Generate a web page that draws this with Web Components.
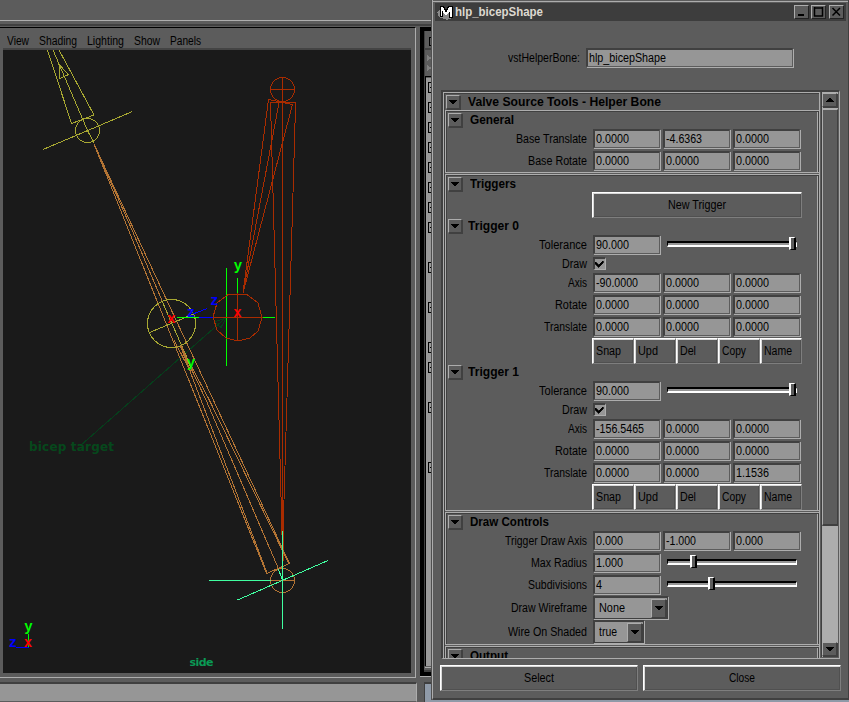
<!DOCTYPE html>
<html lang="en"><head><meta charset="utf-8"><title>hlp_bicepShape</title>
<style>
html,body{margin:0;background:#5c5c5c;overflow:hidden;width:849px;height:702px;font:12px "Liberation Sans",Arial,sans-serif;color:#000}
</style></head><body>
<maya-desktop></maya-desktop>
<script>
const define=(name,html,setup)=>{
  const t=document.createElement('template');t.innerHTML='<style>*{box-sizing:border-box}:host{box-sizing:border-box}</style>'+html;
  customElements.define(name,class extends HTMLElement{
    connectedCallback(){
      if(this.shadowRoot)return;
      const r=this.attachShadow({mode:'open'});
      r.appendChild(t.content.cloneNode(true));
      if(setup)setup(this,r);
    }
  });
};

/* Text condensed or widened to a given advance width */
define('fit-text',`<style>:host{display:inline-block;white-space:nowrap;height:14px;line-height:14px;flex:none}
span{display:inline-block;transform-origin:0 50%}</style><span><slot></slot></span>`,(el,r)=>{
  const w=+el.getAttribute('w'),s=r.querySelector('span');
  s.style.transform=`scaleX(${w/s.getBoundingClientRect().width})`;
  el.style.width=w+'px';
});

define('num-field',`<style>:host{display:flex;align-items:center;flex:none;background:#969696;padding-left:1px;
border:2px solid #404040;border-right:1px solid #5c5c5c;border-bottom:1px solid #5c5c5c;box-shadow:1px 1px 0 #adadad;width:67px;height:19px;margin:0 1px 1px 0}
:host([wide]){width:207px}</style><fit-text></fit-text>`,(el,r)=>{
  const f=r.querySelector('fit-text'),v=el.getAttribute('v');
  const widths={'-4.6363':36,'-90.0000':42,'-156.5465':48,'0.000':27,'1.000':27,'-1.000':30,'4':6,'hlp_bicepShape':77};
  const n=document.createElement('fit-text');n.setAttribute('w',widths[v]||33);n.textContent=v;f.replaceWith(n);
});

define('arrow-button',`<style>:host{display:grid;place-items:center;width:14px;height:14px;flex:none;background:#5c5c5c;border:1px solid #adadad;border-right-color:#404040;border-bottom-color:#404040;box-shadow:1px 1px 0 #404040}
svg{display:block}:host([up]) svg{transform:rotate(180deg)}</style><svg width="8" height="4" shape-rendering="crispEdges"><path d="M0 0H8V1H7V2H6V3H5V4H3V3H2V2H1V1H0Z"/></svg>`);

define('push-button',`<style>:host{display:flex;align-items:center;justify-content:center;height:26px;border:1px solid #fff;border-right-color:#7e7e7e;border-bottom-color:#7e7e7e;box-shadow:inset 1px 1px 0 #d8d8d8,inset -1px -1px 0 #505050;min-width:0}
:host([left]){justify-content:flex-start;padding-left:3px}</style><slot></slot>`);

define('check-box',`<style>:host{display:block;width:13px;height:13px;background:#969696;border:2px solid #404040;border-right:1px solid #adadad;border-bottom:1px solid #adadad}
svg{display:block;margin-left:-1px}</style><svg width="10" height="10" shape-rendering="crispEdges"><path d="M1 3H2V4H3V5H4V6H5V5H6V4H7V3H8V2H9V4H8V5H7V6H6V7H5V8H4V7H3V6H2V5H1Z" stroke="#000" stroke-width=".7"/></svg>`);

define('value-slider',`<style>:host{display:block;width:130px;height:13px;padding-top:6px;margin-left:4px}
.t{height:6px;border-top:2px solid #000;border-left:1px solid #000;border-bottom:2px solid #fff;border-right:1px solid #fff;background:#969696;position:relative}
i{position:absolute;top:-6px;left:var(--at);width:7px;height:13px;background:#5c5c5c;border:1px solid #000;border-left:2px solid #fff;border-top:1px solid #fff;border-right:2px solid #000}</style><div class="t"><i></i></div>`);

define('option-menu',`<style>:host{display:flex;justify-content:space-between;height:23px;width:75px;margin:0 1px 1px 0;background:#969696;border:2px solid #404040;border-right:1px solid #404040;border-bottom:1px solid #404040;box-shadow:1px 1px 0 #adadad;align-items:center;padding:0 1px 0 4px}
arrow-button{width:15px;height:19px}</style><slot></slot><arrow-button></arrow-button>`);

define('form-row',`<style>:host{display:grid;grid-template-columns:141px 1fr;column-gap:6px;height:22px;align-items:start}
:host([short]){height:16px}:host([menu]){height:24px}
.l{display:flex;justify-content:flex-end;height:var(--h,20px);align-items:center}.c{display:flex;gap:2px}
:host([short]) .l{--h:13px}:host([menu]) .l{--h:24px}</style><div class="l"><slot name="label"></slot></div><div class="c"><slot></slot></div>`);

define('frame-title',`<style>:host{display:flex;align-items:center;height:16px;padding-left:1px;font-weight:bold}
::slotted(fit-text){margin-left:8px}:host([sub]) ::slotted(fit-text){margin-left:6px}</style><arrow-button></arrow-button><slot></slot>`);

define('frame-group',`<style>:host{display:block;width:374px;border:1px solid #adadad;border-right:0;box-shadow:inset 1px 1px 0 #404040;padding:1px 0 0 0;margin-bottom:1px}
.b{border-right:1px solid #adadad;margin-right:1px;box-shadow:1px 0 0 #404040}::slotted(frame-title){padding-left:2px!important}</style><div class="b"><slot></slot></div>`);

define('tool-row',`<style>:host{display:grid;grid-template-columns:repeat(5,42px);margin-left:146px}</style>
<push-button left><fit-text w="25">Snap</fit-text></push-button><push-button left><fit-text w="20">Upd</fit-text></push-button><push-button left><fit-text w="16">Del</fit-text></push-button><push-button left><fit-text w="24">Copy</fit-text></push-button><push-button left><fit-text w="28">Name</fit-text></push-button>`);

define('trigger-panel',`<style>:host{display:block}frame-title{padding-left:2px;margin-bottom:1px}form-row.tr{height:21px}</style><frame-title sub><fit-text w="51"></fit-text></frame-title><div class="rows"></div><tool-row></tool-row>`,(el,r)=>{
  const f=document.createElement('fit-text');f.setAttribute('w',51);f.textContent=el.getAttribute('name');r.querySelector('fit-text').replaceWith(f);
  const a=el.getAttribute('axis'),z=el.getAttribute('tz');
  r.querySelector('.rows').innerHTML=`<form-row><fit-text slot="label" w="48">Tolerance</fit-text><num-field v="90.000"></num-field><value-slider style="--at:121px"></value-slider></form-row>
<form-row short><fit-text slot="label" w="25">Draw</fit-text><check-box></check-box></form-row>
<form-row><fit-text slot="label" w="19">Axis</fit-text><num-field v="${a}"></num-field><num-field v="0.0000"></num-field><num-field v="0.0000"></num-field></form-row>
<form-row><fit-text slot="label" w="32">Rotate</fit-text><num-field v="0.0000"></num-field><num-field v="0.0000"></num-field><num-field v="0.0000"></num-field></form-row>
<form-row class="tr"><fit-text slot="label" w="43">Translate</fit-text><num-field v="0.0000"></num-field><num-field v="0.0000"></num-field><num-field v="${z}"></num-field></form-row>`;
});

define('scroll-bar',`<style>:host{display:flex;flex-direction:column;width:17px;height:565px;background:#adadad;border-left:1px solid #404040;padding-top:1px}
.th{height:417px;background:#5c5c5c;border:1px solid #adadad;border-right:1px solid #404040;border-bottom:2px solid #404040;margin-top:1px}
.sp{flex:1}arrow-button{width:15px;height:14px;margin-bottom:1px}</style><arrow-button up></arrow-button><div class="th"></div><div class="sp"></div><arrow-button></arrow-button>`);

define('caption-button',`<style>:host{display:block;width:15px;height:14px;border:1px solid #adadad;border-right-color:#222;border-bottom-color:#222;background:#5c5c5c}svg{display:block}</style><svg width="13" height="12" fill="none" stroke="#000" stroke-width="2"><path/></svg>`,(el,r)=>{
  r.querySelector('path').setAttribute('d',{min:'M3 9H9',max:'M2 2H11M2.5 1V10.5M10.5 1V10.5M2 10H11',close:'M2.5 2L10 9.5M10 2L2.5 9.5'}[el.getAttribute('kind')]);
  if(el.getAttribute('kind')!=='min')r.querySelector('svg').setAttribute('stroke-width','1.5');
});

define('helper-dialog',`<style>:host{display:flex;flex-direction:column;background:#5c5c5c;width:417px;height:700px;border-left:1px solid #adadad;border-right:1px solid #404040;border-bottom:2px solid #404040;padding-top:3px;box-shadow:inset 0 1px 0 #5c5c5c,inset 0 2px 0 #adadad,-1px 0 0 #505050}
.bar{display:flex;align-items:center;height:18px;margin:0 2px;background:#3d3d3d;font-weight:bold;color:#ddd9d0;flex:none;padding-right:2px}
.bar svg{margin:0 1px 0 2px}.bar fit-text{margin-right:auto}
.name{display:flex;align-items:center;height:69px;padding:5px 0 0 75px;gap:6px;flex:none}
.scroll{display:flex;width:399px;height:569px;margin-left:8px;border:2px solid #404040;border-right:1px solid #adadad;border-bottom:1px solid #adadad;overflow:hidden;flex:none}
.view{width:377px;height:566px;overflow:hidden;border-left:1px solid #adadad;border-top:1px solid #adadad;box-shadow:inset 1px 1px 0 #404040;padding:1px 0 0 1px;border-right:1px solid #adadad;flex:none;margin-right:1px}
.gap{margin-bottom:1px}
.foot{display:flex;gap:5px;margin:6px 0 0 7px}.foot push-button{width:198px}
.g{height:60px}.g frame-title{padding-left:2px}.n{height:26px}.n push-button{width:210px;margin-left:146px}</style>
<div class="bar"><svg width="17" height="16" shape-rendering="crispEdges"><path d="M0 8L5 5H15V14L10 16L2 13Z" fill="#8a8a8a"/><path d="M3 2H7L9 6L11 2H16V14H12V8L9 12L6 8V13H3Z" fill="#000"/><path d="M4 3H6L9 9L12 3H15V13H13V7L10 11H8L5 6V12H4Z" fill="#fff"/></svg><fit-text w="88">hlp_bicepShape</fit-text><caption-button kind="min"></caption-button><caption-button kind="max" style="margin-left:2px"></caption-button><caption-button kind="close" style="margin-left:3px"></caption-button></div>
<div class="name"><fit-text w="72">vstHelperBone:</fit-text><num-field wide v="hlp_bicepShape"></num-field></div>
<div class="scroll"><div class="view"><frame-title><fit-text w="193">Valve Source Tools - Helper Bone</fit-text></frame-title>
<frame-group><div class="g"><frame-title class="gap"><fit-text w="44">General</fit-text></frame-title>
<form-row><fit-text slot="label" w="71">Base Translate</fit-text><num-field v="0.0000"></num-field><num-field v="-4.6363"></num-field><num-field v="0.0000"></num-field></form-row>
<form-row><fit-text slot="label" w="59">Base Rotate</fit-text><num-field v="0.0000"></num-field><num-field v="0.0000"></num-field><num-field v="0.0000"></num-field></form-row></div></frame-group>
<frame-group><frame-title><fit-text w="46">Triggers</fit-text></frame-title><div class="n"><push-button><fit-text w="58">New Trigger</fit-text></push-button></div>
<trigger-panel name="Trigger 0" axis="-90.0000" tz="0.0000"></trigger-panel>
<trigger-panel name="Trigger 1" axis="-156.5465" tz="1.1536"></trigger-panel></frame-group>
<frame-group><frame-title class="gap"><fit-text w="79">Draw Controls</fit-text></frame-title>
<form-row><fit-text slot="label" w="82">Trigger Draw Axis</fit-text><num-field v="0.000"></num-field><num-field v="-1.000"></num-field><num-field v="0.000"></num-field></form-row>
<form-row><fit-text slot="label" w="56">Max Radius</fit-text><num-field v="1.000"></num-field><value-slider style="--at:22px"></value-slider></form-row>
<form-row style="height:21px"><fit-text slot="label" w="59">Subdivisions</fit-text><num-field v="4"></num-field><value-slider style="--at:40px"></value-slider></form-row>
<form-row menu><fit-text slot="label" w="76">Draw Wireframe</fit-text><option-menu><fit-text w="26">None</fit-text></option-menu></form-row>
<form-row menu><fit-text slot="label" w="79">Wire On Shaded</fit-text><option-menu style="width:51px"><fit-text w="18">true</fit-text></option-menu></form-row></frame-group>
<frame-group><frame-title><fit-text w="38">Output</fit-text></frame-title></frame-group></div><scroll-bar></scroll-bar></div>
<div class="foot"><push-button><fit-text w="30">Select</fit-text></push-button><push-button><fit-text w="26">Close</fit-text></push-button></div>`);

define('side-view',`<style>:host{display:block;width:408px;height:623px;background:#1a1a1a}svg{display:block}
text{font:bold 14px "Liberation Mono","DejaVu Sans Mono",monospace;text-anchor:middle}.w{font:bold 12px "DejaVu Sans",sans-serif}</style>
<svg width="408" height="623" viewBox="3 50 408 623" fill="none" shape-rendering="crispEdges">
<g stroke="#053f1b" fill="none"><path d="M226 317.5L80 446M214.500 322L226 318L221 327.500Z"/></g>
<text class="w" x="71.500" y="451" fill="#06481c" textLength="85">bicep target</text>
<g stroke="#a92c00"><circle cx="282.500" cy="89.500" r="12"/><path d="M282.500 77V531M270.500 89.500H295M268.500 99.500L292.500 104.500L243 293L268.500 99.500M279 103L243 293M270.500 102.500H295.500V106L292.500 210L284 500L283 562M270.500 102.500L273.500 210L278.500 400L282 535"/></g>
<g stroke="#b37434"><path d="M94 144L266.500 573.500L289.500 563.500L94 144L132 230L171.500 323M180 345L267 573M180 345L206 400L279 570M180 345L209.300 400L288 562"/><circle cx="282.500" cy="580.500" r="12"/><path d="M270.500 580.500H295"/></g>
<g stroke="#a8a832"><circle cx="87.500" cy="130.500" r="12"/><path d="M43 149.500L132.500 111.500M47.500 50L71.500 123.500L94 115L59 50M53 50L87.500 130.500L94 143M59 64.500L60 78.500L68.500 74.500ZM149.500 332.500L195 313.500M162 301L188 360"/><circle cx="171.500" cy="323.500" r="24"/></g>
<path d="M174 340L191 373L181 345L190 366" stroke="#b37434"/>
<path d="M177 317.500H199M262 317.500H275M226.500 268V366M237.500 278V293M28.500 634V647" stroke="#0f0"/>
<path d="M199 317.500H213M193 314L207 308.500M16 647.500H29" stroke="#00f"/>
<path d="M228 294.500L247 294.500L258 303L262 317.500L258 331L250 338L238 341L226 338L217 330L213 317L217 303ZM237.500 293V341M213 317.500H262" stroke="#a92c00"/>
<path d="M282.500 531V629M209 580.500H270.500M237.500 600L328 560.500M278.500 569.500L282.500 580" stroke="#40ffa0"/>
<g fill="#0f0"><text x="238" y="270">y</text><text x="191" y="367">y</text><text x="28.500" y="631">y</text></g>
<g fill="#f00"><text x="171.500" y="323">x</text><text x="237.500" y="317">x</text><text x="28" y="647">x</text></g>
<g fill="#00f"><text x="214.500" y="305">z</text><text x="191" y="317">z</text><text x="13" y="647">z</text></g>
<text class="w" x="201.500" y="666" fill="#0a9a55" textLength="24" style="font-size:11px">side</text>
</svg>`);

define('view-panel',`<style>:host{display:flex;flex-direction:column;width:416px;height:651px;border-right:1px solid #adadad;border-bottom:1px solid #adadad;border-top:1px solid #000}
.m{display:flex;align-items:center;height:20px;padding:6px 0 0 5px;flex:none;margin-left:2px}
side-view{margin-left:3px}.m fit-text{margin-right:10px}.line{height:2px;background:#444;margin:0 4px 0 3px;flex:none}</style>
<div class="m"><fit-text w="22">View</fit-text><fit-text w="38">Shading</fit-text><fit-text w="37">Lighting</fit-text><fit-text w="26">Show</fit-text><fit-text w="31">Panels</fit-text></div><div class="line"></div><side-view></side-view>`);

define('outliner-edge',`<style>:host{display:block;width:12px;height:650px}svg{display:block}</style><svg width="12" height="650" viewBox="420 27 12 650" shape-rendering="crispEdges"><path d="M420 27H432V31H424V672H432V676H420Z"/><path d="M424 31H432V672H424Z" fill="#5c5c5c"/><path d="M424 31H425V666H424ZM425 48H432V50H425ZM424 670H432V672H424Z" fill="#404040"/><path d="M426 78H432V666H426Z" fill="#999"/><path d="M425 76H432V77H426V666H425Z"/><path d="M425 667H432V668H425Z" fill="#adadad"/><path d="M427 55L432 58L427 61ZM427 65L432 68L427 71Z" fill="#808080"/><path d="M432 37.500H429.500V45.500H432" stroke="#000" fill="none"/><g class="n" fill="none" stroke="#000"></g><path d="M420 676H432V677H420Z" fill="#adadad"/></svg>`,(el,r)=>{
  r.querySelector('.n').innerHTML=[82,102,122,142,162,182,202,222,262,302,342,362,402,462].map(y=>`<path d="M432 ${y+.5}H428.500V${y+10.5}H432M430 ${y+5.5}H432"/>`).join('');
});

define('maya-desktop',`<style>:host{display:block;position:relative;width:849px;height:702px;overflow:hidden;background:#5c5c5c}
.top{height:27px;padding-top:20px}.top div{height:6px;border-top:1px solid #adadad;border-bottom:2px solid #404040}
.mid{display:flex;height:651px;gap:4px}.cmd{display:flex;height:20px;margin-top:4px;gap:7px}
.cmd div{width:417px;background:#969696;border-top:2px solid #404040;border-right:1px solid #adadad;border-bottom:1px solid #5c5c5c}.cmd p{margin:0;flex:1;background:#8f9aa8;border-top:2px solid #404040;border-left:1px solid #404040}
helper-dialog{position:absolute;left:432px;top:0}</style>
<div class="top"><div></div></div><div class="mid"><view-panel></view-panel><outliner-edge></outliner-edge></div><div class="cmd"><div></div><p></p></div><helper-dialog></helper-dialog>`);
</script></body></html>
